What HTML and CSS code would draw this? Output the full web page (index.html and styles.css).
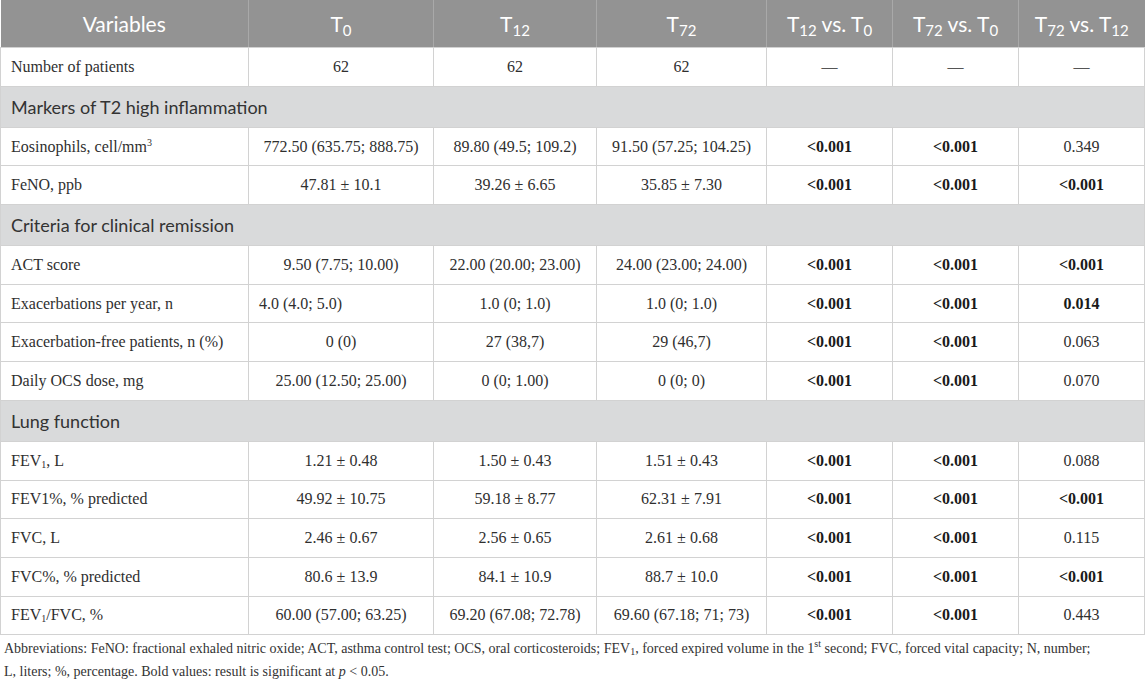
FILE: index.html
```html
<!DOCTYPE html>
<html lang="en">
<head>
    <meta charset="UTF-8">
    <title>Table</title>
    <link rel="stylesheet" href="styles.css">
</head>
<body>
    <table class="data">
        <colgroup>
            <col class="c-var">
            <col class="c-t0">
            <col class="c-t12">
            <col class="c-t72">
            <col class="c-p">
            <col class="c-p">
            <col class="c-p">
        </colgroup>
        <thead>
            <tr>
                <th>Variables</th>
                <th>T<sub>0</sub></th>
                <th>T<sub>12</sub></th>
                <th>T<sub>72</sub></th>
                <th>T<sub>12</sub> vs. T<sub>0</sub></th>
                <th>T<sub>72</sub> vs. T<sub>0</sub></th>
                <th>T<sub>72</sub> vs. T<sub>12</sub></th>
            </tr>
        </thead>
        <tbody>
            <tr>
                <td>Number of patients</td>
                <td>62</td><td>62</td><td>62</td>
                <td class="dash">—</td><td class="dash">—</td><td class="dash">—</td>
            </tr>
            <tr class="section"><td colspan="7">Markers of T2 high inflammation</td></tr>
            <tr>
                <td>Eosinophils, cell/mm<sup>3</sup></td>
                <td>772.50 (635.75; 888.75)</td>
                <td>89.80 (49.5; 109.2)</td>
                <td>91.50 (57.25; 104.25)</td>
                <td><b>&lt;0.001</b></td><td><b>&lt;0.001</b></td><td>0.349</td>
            </tr>
            <tr>
                <td>FeNO, ppb</td>
                <td>47.81 ± 10.1</td>
                <td>39.26 ± 6.65</td>
                <td>35.85 ± 7.30</td>
                <td><b>&lt;0.001</b></td><td><b>&lt;0.001</b></td><td><b>&lt;0.001</b></td>
            </tr>
            <tr class="section"><td colspan="7">Criteria for clinical remission</td></tr>
            <tr>
                <td>ACT score</td>
                <td>9.50 (7.75; 10.00)</td>
                <td>22.00 (20.00; 23.00)</td>
                <td>24.00 (23.00; 24.00)</td>
                <td><b>&lt;0.001</b></td><td><b>&lt;0.001</b></td><td><b>&lt;0.001</b></td>
            </tr>
            <tr>
                <td>Exacerbations per year, n</td>
                <td class="left">4.0 (4.0; 5.0)</td>
                <td>1.0 (0; 1.0)</td>
                <td>1.0 (0; 1.0)</td>
                <td><b>&lt;0.001</b></td><td><b>&lt;0.001</b></td><td><b>0.014</b></td>
            </tr>
            <tr>
                <td>Exacerbation-free patients, n (%)</td>
                <td>0 (0)</td>
                <td>27 (38,7)</td>
                <td>29 (46,7)</td>
                <td><b>&lt;0.001</b></td><td><b>&lt;0.001</b></td><td>0.063</td>
            </tr>
            <tr>
                <td>Daily OCS dose, mg</td>
                <td>25.00 (12.50; 25.00)</td>
                <td>0 (0; 1.00)</td>
                <td>0 (0; 0)</td>
                <td><b>&lt;0.001</b></td><td><b>&lt;0.001</b></td><td>0.070</td>
            </tr>
            <tr class="section"><td colspan="7">Lung function</td></tr>
            <tr>
                <td>FEV<sub>1</sub>, L</td>
                <td>1.21 ± 0.48</td>
                <td>1.50 ± 0.43</td>
                <td>1.51 ± 0.43</td>
                <td><b>&lt;0.001</b></td><td><b>&lt;0.001</b></td><td>0.088</td>
            </tr>
            <tr>
                <td>FEV1%, % predicted</td>
                <td>49.92 ± 10.75</td>
                <td>59.18 ± 8.77</td>
                <td>62.31 ± 7.91</td>
                <td><b>&lt;0.001</b></td><td><b>&lt;0.001</b></td><td><b>&lt;0.001</b></td>
            </tr>
            <tr>
                <td>FVC, L</td>
                <td>2.46 ± 0.67</td>
                <td>2.56 ± 0.65</td>
                <td>2.61 ± 0.68</td>
                <td><b>&lt;0.001</b></td><td><b>&lt;0.001</b></td><td>0.115</td>
            </tr>
            <tr>
                <td>FVC%, % predicted</td>
                <td>80.6 ± 13.9</td>
                <td>84.1 ± 10.9</td>
                <td>88.7 ± 10.0</td>
                <td><b>&lt;0.001</b></td><td><b>&lt;0.001</b></td><td><b>&lt;0.001</b></td>
            </tr>
            <tr>
                <td>FEV<sub>1</sub>/FVC, %</td>
                <td>60.00 (57.00; 63.25)</td>
                <td>69.20 (67.08; 72.78)</td>
                <td>69.60 (67.18; 71; 73)</td>
                <td><b>&lt;0.001</b></td><td><b>&lt;0.001</b></td><td>0.443</td>
            </tr>
        </tbody>
    </table>

    <p class="note">
        Abbreviations: FeNO: fractional exhaled nitric oxide; ACT, asthma control test; OCS, oral corticosteroids; FEV<sub>1</sub>, forced expired volume in the 1<sup>st</sup> second; FVC, forced vital capacity; N, number;<br>
        L, liters; %, percentage. Bold values: result is significant at <i>p</i> &lt; 0.05.
    </p>
</body>
</html>
```

FILE: styles.css
```css
:root {
    --head: #939393;
    --section: #d9dadb;
    --line: #d2d2d2;
    --text: #2f2f2f;
}

body {
    margin: 0;
    background: #fff;
    color: var(--text);
    font-family: "Liberation Serif", serif;
}

.data {
    width: 1145px;
    border-collapse: collapse;
    table-layout: fixed;
}

.c-var { width: 248px; }
.c-t0 { width: 185px; }
.c-t12 { width: 163px; }
.c-t72 { width: 170px; }
.c-p { width: 126px; }

.data th {
    background: var(--head);
    color: #fff;
    font-family: Lato, "Open Sans", sans-serif;
    font-weight: 400;
    font-size: 21px;
    height: 47px;
    padding: 0;
    text-align: center;
    border-left: 1px solid #a9a9a9;
    border-bottom: 1px solid var(--line);
}

.data th:first-child {
    border-left: none;
}

.data th sub {
    font-size: 15px;
    vertical-align: -4px;
    line-height: 0;
}

.data td {
    height: 37.7px;
    padding: 0 10px;
    font-size: 16px;
    text-align: center;
    border: 1px solid var(--line);
    border-top: none;
    white-space: nowrap;
}

.data td:first-child {
    text-align: left;
    border-left: 1px solid var(--line);
}

.data td.left {
    text-align: left;
}

.data td b {
    color: #1a1a1a;
}

.data td.dash {
    color: #555;
}

.data td sub,
.data td sup,
.note sub,
.note sup {
    font-size: 10px;
    line-height: 0;
}

.data td sub,
.note sub {
    vertical-align: -2px;
}

.section td {
    height: 40px;
    background: var(--section);
    font-family: Lato, "Open Sans", sans-serif;
    font-size: 18px;
    color: #333;
    text-align: left;
}

.note {
    margin: 0;
    padding: 2px 4px 0;
    font-size: 14px;
    line-height: 23px;
    color: #333;
    white-space: nowrap;
}
```
